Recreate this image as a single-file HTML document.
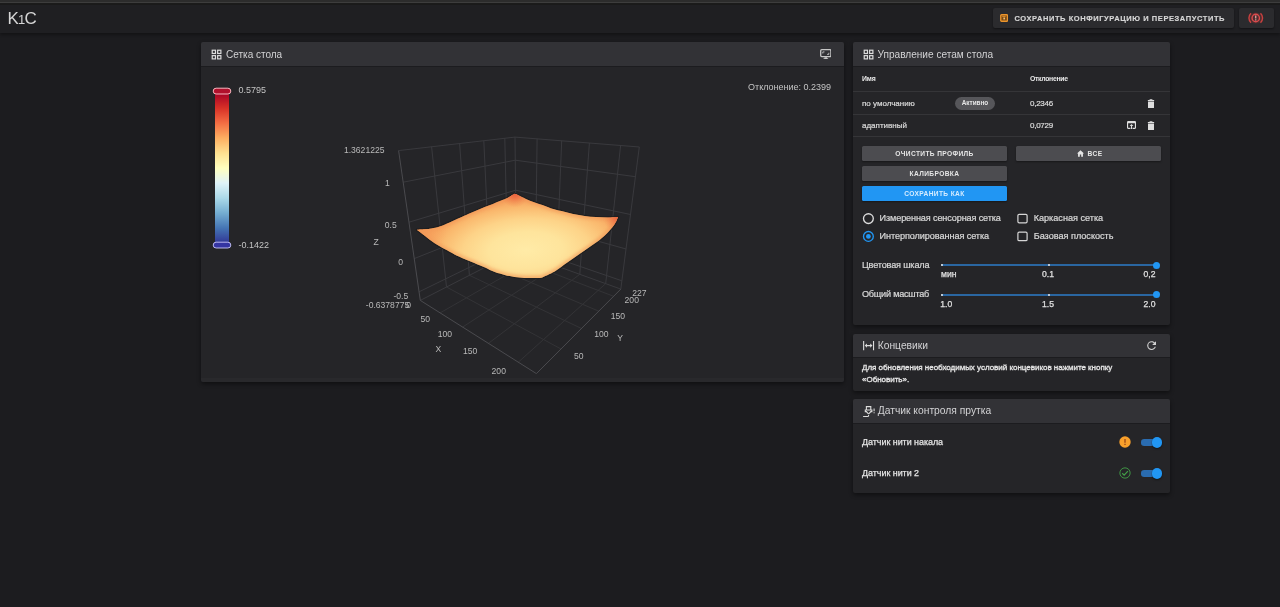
<!DOCTYPE html>
<html lang="ru"><head><meta charset="utf-8"><title>K1C</title>
<style>
*{box-sizing:border-box;margin:0;padding:0}
html,body{width:1280px;height:607px;overflow:hidden}
body{background:#1c1c1f;font-family:"Liberation Sans",sans-serif;color:#e2e2e2;position:relative;font-size:8px}
.abs{position:absolute}
#app{position:absolute;left:0;top:0;width:1280px;height:607px;will-change:transform}
.strip1{left:0;top:0;width:1280px;height:2px;background:#2c2c2c}
.strip2{left:0;top:2px;width:1280px;height:1px;background:#3d3d3d}
.strip3{left:0;top:3px;width:1280px;height:2px;background:#1b1b1b}
.appbar{left:0;top:5px;width:1280px;height:27.800px;background:#1f1f22;box-shadow:0 2px 3px rgba(0,0,0,.32)}
.logo{left:7.5px;top:9px;font-size:17px;line-height:20px;color:#d6d6d6;letter-spacing:-0.75px}
.logo small{font-size:13px}
.tbtn{top:8px;height:20px;background:#2b2b2e;border-radius:2px;box-shadow:0 1px 2px rgba(0,0,0,.4)}
.tbtn .t{position:absolute;left:21.5px;top:0;line-height:21.7px;font-size:7.5px;font-weight:bold;letter-spacing:.58px;color:#d6d6d6;-webkit-text-stroke:.15px #d6d6d6;white-space:nowrap}
.card{background:#252528;border-radius:2px;box-shadow:0 2px 4px rgba(0,0,0,.45)}
.hd{position:absolute;left:0;top:0;right:0;height:24px;background:#323236;border-radius:2px 2px 0 0;box-shadow:0 1px 0 rgba(0,0,0,.22)}
.hd .ti{position:absolute;top:0;line-height:25.3px;font-size:10px;color:#d2d2d4;white-space:nowrap}
.hd svg{position:absolute}
.th{font-size:6.9px;font-weight:bold;color:#e8e8e8;line-height:8px;white-space:nowrap}
.td{font-size:8px;color:#dcdcdc;line-height:10px;white-space:nowrap;-webkit-text-stroke:.2px #dcdcdc}
.hr{height:1px;background:#353538;left:0;right:0}
.chip{left:102px;top:55px;width:40px;height:12.5px;border-radius:7px;background:#56565a;color:#e6e6e6;font-size:6.4px;font-weight:bold;text-align:center;line-height:12.5px}
.btn{height:14.5px;background:#4c4c50;border-radius:1.5px;color:#e6e6e6;font-size:6.6px;font-weight:bold;letter-spacing:.38px;text-align:center;line-height:15px;box-shadow:0 1px 2px rgba(0,0,0,.4);white-space:nowrap}
.btn.blue{background:#2196f3;color:#d6ecff}
.lbl{font-size:9.1px;color:#d8d8d8;line-height:11px;white-space:nowrap;-webkit-text-stroke:.22px #d8d8d8}
.sl{font-size:8.6px;color:#e0e0e0;line-height:10px;white-space:nowrap;-webkit-text-stroke:.25px #e0e0e0}
.track{height:1.6px;background:#2a66a1;left:88px;width:216px}
.tick{width:2px;height:2px;border-radius:1px;background:#e8e8e8}
.thumb{width:7.4px;height:7.4px;border-radius:50%;background:#2196f3}
.sub{font-size:8px;line-height:12px;color:#e4e4e4;-webkit-text-stroke:.33px #e4e4e4;letter-spacing:-.02px;white-space:nowrap}
.row{font-size:8.9px;line-height:11px;color:#e4e4e4;-webkit-text-stroke:.25px #e4e4e4;white-space:nowrap}
.tog{width:17px;height:6.4px;border-radius:3.2px;background:#2a6cb0;margin-top:.3px}
.tth{width:10.6px;height:10.6px;border-radius:50%;background:#2196f3;box-shadow:0 1px 2px rgba(0,0,0,.5);margin:.4px 0 0 .6px}
svg text{font-family:"Liberation Sans",sans-serif}
.g{stroke:#39393d;stroke-width:1;fill:none}
.f{stroke:#333336;stroke-width:1;fill:none}
.a{stroke:#4a4a4e;stroke-width:1;fill:none}
</style></head><body><div id="app">
<div class="abs strip1"></div><div class="abs strip2"></div><div class="abs strip3"></div>
<div class="abs appbar"></div>
<div class="abs logo">K<small>1</small>C</div>

<div class="abs tbtn" style="left:993px;width:241px">
<svg class="abs" style="left:6.800px;top:6.200px" width="8.400" height="8.400" viewBox="0 0 9 9"><rect x=".8" y=".8" width="7.2" height="7" rx=".8" fill="#7b4a14" stroke="#ec952c" stroke-width="1.4"/><rect x="3.6" y="3.8" width="1.8" height="2" fill="#f6c070"/><rect x="2.4" y="2.2" width="3.6" height="1" fill="#d98a2a"/></svg>
<span class="t">СОХРАНИТЬ КОНФИГУРАЦИЮ И ПЕРЕЗАПУСТИТЬ</span></div>
<div class="abs tbtn" style="left:1239px;width:35px">
<svg class="abs" style="left:9.3px;top:4.2px" width="15.500" height="12" viewBox="0 0 31 24"><ellipse cx="15.500" cy="12" rx="14" ry="11" fill="#c23a3a" opacity=".22"/><g fill="none" stroke="#de4a4c" stroke-width="2.800"><circle cx="15.500" cy="12" r="7.400"/><path stroke="#c9403f" d="M6 2.500A13 13 0 0 0 6 21.500M25 2.500A13 13 0 0 1 25 21.500"/></g><path fill="#f0a9a4" d="M14.300 7h2.400v6h-2.400zM14.300 14.600h2.400v2.400h-2.400z"/></svg>
</div>

<!-- LEFT CARD -->
<div class="abs card" style="left:201px;top:42px;width:643px;height:340px">
 <div class="abs" style="left:0;right:0;bottom:0;height:4px;background:#29292c;border-radius:0 0 2px 2px"></div>
 <div class="hd">
  <svg style="left:9.3px;top:6.3px" width="13" height="13" viewBox="0 0 24 24"><g fill="none" stroke="#dcdcdc" stroke-width="2.2"><rect x="4.1" y="4.1" width="6" height="6"/><rect x="14.1" y="4.1" width="6" height="6"/><rect x="4.1" y="14.1" width="6" height="6"/><rect x="14.1" y="14.1" width="6" height="6"/></g></svg>
  <span class="ti" style="left:25px">Сетка стола</span>
  <svg style="left:618.8px;top:6.9px" width="11.600" height="10.200" viewBox="0 0 11.600 10.200"><rect x=".7" y=".7" width="10.200" height="6.900" rx="1" fill="none" stroke="#c6c6c6" stroke-width="1.300"/><path fill="none" stroke="#c6c6c6" stroke-width=".9" d="M2.800 4.500V2.900h1.700M8.800 3.800v1.600H7.100"/><path fill="#c6c6c6" d="M4.500 8.200h2.600v1h1v1H3.500v-1h1z"/></svg>
 </div>
</div>
<svg class="abs" style="left:0;top:0" width="1280" height="373.800" viewBox="0 0 1280 373.800">
<defs>
<linearGradient id="vm" x1="0" y1="0" x2="0" y2="1">
<stop offset="0" stop-color="#a50026"/><stop offset=".1" stop-color="#d73027"/><stop offset=".2" stop-color="#f46d43"/><stop offset=".3" stop-color="#fdae61"/><stop offset=".4" stop-color="#fee090"/><stop offset=".5" stop-color="#ffffbf"/><stop offset=".6" stop-color="#e0f3f8"/><stop offset=".7" stop-color="#abd9e9"/><stop offset=".8" stop-color="#74add1"/><stop offset=".9" stop-color="#4575b4"/><stop offset="1" stop-color="#313695"/>
</linearGradient>
<radialGradient id="sg" gradientUnits="userSpaceOnUse" cx="0" cy="0" r="1" gradientTransform="translate(526 250) rotate(-3) scale(116 57)">
<stop offset="0" stop-color="#ffeba7"/><stop offset=".32" stop-color="#fee49c"/><stop offset=".55" stop-color="#fdd388"/><stop offset=".75" stop-color="#fab96e"/><stop offset=".9" stop-color="#f6a15c"/><stop offset="1" stop-color="#f08c51"/>
</radialGradient>
<radialGradient id="c1" gradientUnits="userSpaceOnUse" cx="514.8" cy="192.500" r="15"><stop offset="0" stop-color="#e8553a"/><stop offset=".4" stop-color="#ec6a42" stop-opacity=".7"/><stop offset="1" stop-color="#f08c51" stop-opacity="0"/></radialGradient>
<radialGradient id="c2" gradientUnits="userSpaceOnUse" cx="619.500" cy="216" r="17"><stop offset="0" stop-color="#e8553a"/><stop offset=".4" stop-color="#ec6a42" stop-opacity=".7"/><stop offset="1" stop-color="#f08c51" stop-opacity="0"/></radialGradient>
<radialGradient id="c3" gradientUnits="userSpaceOnUse" cx="417" cy="230" r="30"><stop offset="0" stop-color="#f39a58"/><stop offset="1" stop-color="#f8a761" stop-opacity="0"/></radialGradient>
<filter id="bl" x="-10%" y="-10%" width="120%" height="120%"><feGaussianBlur stdDeviation="1.6"/></filter>
<clipPath id="sc"><path d="M416.9,229.8 C416.9,229.8 422.3,229.5 424.8,229.3 C427.3,229.1 429.3,228.9 431.8,228.4 C434.3,227.9 436.7,227.4 439.7,226.4 C442.7,225.4 446.2,223.9 449.6,222.4 C453.0,220.9 456.9,219.1 460.0,217.7 C463.1,216.3 465.4,215.2 468.2,214.0 C470.9,212.8 473.8,211.7 476.5,210.5 C479.2,209.3 482.0,208.1 484.7,207.0 C487.4,205.9 490.1,205.1 492.9,204.0 C495.6,202.9 499.0,201.5 501.2,200.6 C503.4,199.7 504.5,199.3 506.1,198.5 C507.8,197.7 509.7,196.5 511.1,195.7 C512.5,194.9 514.8,193.8 514.8,193.8 C514.8,193.8 517.4,194.8 519.3,195.7 C521.1,196.5 523.4,197.8 525.9,198.9 C528.4,200.0 531.4,201.2 534.1,202.2 C536.9,203.2 539.6,204.1 542.4,205.1 C545.1,206.1 547.4,207.2 550.6,208.2 C553.8,209.2 557.8,210.1 561.5,211.1 C565.2,212.1 569.2,213.2 573.1,214.0 C577.0,214.8 580.8,215.5 584.6,216.0 C588.4,216.5 592.3,216.9 596.1,217.1 C599.9,217.3 604.0,217.4 607.6,217.4 C611.2,217.4 618.0,216.9 618.0,216.9 C618.0,216.9 616.7,220.5 615.7,222.3 C614.7,224.1 613.6,225.8 612.2,227.5 C610.9,229.2 609.3,231.0 607.6,232.7 C605.9,234.4 603.8,236.3 601.9,237.9 C600.0,239.5 598.0,241.1 596.1,242.5 C594.2,243.9 592.2,245.2 590.3,246.5 C588.4,247.8 586.5,249.2 584.6,250.5 C582.7,251.8 580.7,253.2 578.8,254.6 C576.9,255.9 575.0,257.3 573.1,258.6 C571.2,259.9 569.2,261.2 567.3,262.6 C565.4,264.0 563.4,265.4 561.5,266.7 C559.6,268.0 557.8,269.5 555.8,270.7 C553.8,271.9 551.4,273.2 549.6,274.1 C547.9,275.0 546.5,275.6 545.3,276.1 C544.1,276.7 543.3,277.1 542.3,277.4 C541.3,277.7 540.6,277.8 539.3,277.9 C538.0,278.0 536.0,278.1 534.4,278.1 C532.8,278.1 531.1,278.1 529.5,278.1 C527.9,278.1 526.1,278.0 524.5,277.9 C522.9,277.8 521.2,277.8 519.6,277.6 C518.0,277.4 516.2,277.1 514.6,276.9 C513.0,276.6 511.4,276.4 509.7,276.1 C508.0,275.8 506.3,275.3 504.7,274.9 C503.1,274.5 501.4,274.1 499.8,273.6 C498.2,273.1 496.5,272.5 494.8,271.9 C493.1,271.3 491.6,270.8 489.9,270.0 C488.2,269.2 486.2,268.1 484.5,267.3 C482.8,266.5 481.3,266.0 479.6,265.3 C477.9,264.6 476.0,263.7 474.3,263.0 C472.6,262.3 471.0,261.7 469.3,261.0 C467.6,260.3 466.0,259.7 464.4,259.0 C462.8,258.3 461.1,257.5 459.5,256.7 C457.9,255.9 456.1,255.2 454.5,254.4 C452.9,253.6 451.2,252.7 449.6,251.8 C448.0,250.9 446.2,250.0 444.6,249.1 C443.0,248.2 441.4,247.2 439.7,246.2 C438.0,245.2 436.3,244.3 434.7,243.2 C433.1,242.1 431.4,240.9 429.8,239.7 C428.2,238.5 426.3,237.0 424.8,235.8 C423.3,234.7 422.2,233.8 420.9,232.8 C419.6,231.8 416.9,229.8 416.9,229.8Z"/></clipPath>
</defs>
<!-- visual map -->
<rect x="215" y="93" width="14" height="150" fill="url(#vm)"/>
<rect x="213.2" y="88.2" width="17.6" height="5.8" rx="2.9" fill="#b0102c" stroke="#f8b8c0" stroke-width="1"/>
<rect x="213.2" y="242.2" width="17.6" height="5.8" rx="2.9" fill="#3535a2" stroke="#bcbaf0" stroke-width="1"/>
<g font-size="9" fill="#c4c4c4"><text x="238.5" y="93.5">0.5795</text><text x="238.5" y="247.6">-0.1422</text>
<text x="831" y="90.2" text-anchor="end">Отклонение: 0.2399</text></g>
<!-- grid -->
<path class="g" d="M446.5,287.0 L431.6,146.8"/>
<path class="g" d="M469.4,275.3 L459.6,143.5"/>
<path class="g" d="M489.6,265.0 L483.8,140.7"/>
<path class="g" d="M507.5,255.9 L504.8,138.3"/>
<path class="g" d="M419.1,291.8 L516.2,244.5"/>
<path class="g" d="M414.2,258.6 L515.9,218.3"/>
<path class="g" d="M409.0,222.2 L515.6,190.2"/>
<path class="g" d="M403.2,182.2 L515.3,160.2"/>
<path class="g" d="M535.5,258.3 L537.1,138.8"/>
<path class="g" d="M556.6,265.9 L561.7,140.8"/>
<path class="g" d="M579.8,274.3 L589.4,143.0"/>
<path class="g" d="M605.7,283.6 L620.6,145.5"/>
<path class="g" d="M516.2,244.5 L621.9,280.8"/>
<path class="g" d="M515.9,218.3 L626.0,249.0"/>
<path class="g" d="M515.6,190.2 L630.5,214.5"/>
<path class="g" d="M515.3,160.2 L635.4,176.7"/>
<path class="f" d="M440.1,312.9 L535.5,258.3"/>
<path class="f" d="M446.5,287.0 L561.0,349.0"/>
<path class="f" d="M462.6,327.1 L556.6,265.9"/>
<path class="f" d="M469.4,275.3 L581.5,328.5"/>
<path class="f" d="M488.4,343.4 L579.8,274.3"/>
<path class="f" d="M489.6,265.0 L598.8,311.2"/>
<path class="f" d="M518.3,362.2 L605.7,283.6"/>
<path class="f" d="M507.5,255.9 L613.7,296.3"/>
<path class="g" d="M398.6,150.6 L515.0,137.1"/>
<path class="g" d="M515.0,137.1 L639.3,147.0"/>
<path class="g" d="M516.3,251.4 L515.0,137.1"/>
<path class="g" d="M620.8,289.1 L639.3,147.0"/>
<path class="g" d="M420.3,300.4 L516.3,251.4"/>
<path class="g" d="M516.3,251.4 L620.8,289.1"/>
<path class="a" d="M420.3,300.4 L398.6,150.6"/>
<path class="a" d="M420.3,300.4 L536.4,373.6"/>
<path class="a" d="M536.4,373.6 L620.8,289.1"/>
<!-- surface -->
<path d="M416.9,229.8 C416.9,229.8 422.3,229.5 424.8,229.3 C427.3,229.1 429.3,228.9 431.8,228.4 C434.3,227.9 436.7,227.4 439.7,226.4 C442.7,225.4 446.2,223.9 449.6,222.4 C453.0,220.9 456.9,219.1 460.0,217.7 C463.1,216.3 465.4,215.2 468.2,214.0 C470.9,212.8 473.8,211.7 476.5,210.5 C479.2,209.3 482.0,208.1 484.7,207.0 C487.4,205.9 490.1,205.1 492.9,204.0 C495.6,202.9 499.0,201.5 501.2,200.6 C503.4,199.7 504.5,199.3 506.1,198.5 C507.8,197.7 509.7,196.5 511.1,195.7 C512.5,194.9 514.8,193.8 514.8,193.8 C514.8,193.8 517.4,194.8 519.3,195.7 C521.1,196.5 523.4,197.8 525.9,198.9 C528.4,200.0 531.4,201.2 534.1,202.2 C536.9,203.2 539.6,204.1 542.4,205.1 C545.1,206.1 547.4,207.2 550.6,208.2 C553.8,209.2 557.8,210.1 561.5,211.1 C565.2,212.1 569.2,213.2 573.1,214.0 C577.0,214.8 580.8,215.5 584.6,216.0 C588.4,216.5 592.3,216.9 596.1,217.1 C599.9,217.3 604.0,217.4 607.6,217.4 C611.2,217.4 618.0,216.9 618.0,216.9 C618.0,216.9 616.7,220.5 615.7,222.3 C614.7,224.1 613.6,225.8 612.2,227.5 C610.9,229.2 609.3,231.0 607.6,232.7 C605.9,234.4 603.8,236.3 601.9,237.9 C600.0,239.5 598.0,241.1 596.1,242.5 C594.2,243.9 592.2,245.2 590.3,246.5 C588.4,247.8 586.5,249.2 584.6,250.5 C582.7,251.8 580.7,253.2 578.8,254.6 C576.9,255.9 575.0,257.3 573.1,258.6 C571.2,259.9 569.2,261.2 567.3,262.6 C565.4,264.0 563.4,265.4 561.5,266.7 C559.6,268.0 557.8,269.5 555.8,270.7 C553.8,271.9 551.4,273.2 549.6,274.1 C547.9,275.0 546.5,275.6 545.3,276.1 C544.1,276.7 543.3,277.1 542.3,277.4 C541.3,277.7 540.6,277.8 539.3,277.9 C538.0,278.0 536.0,278.1 534.4,278.1 C532.8,278.1 531.1,278.1 529.5,278.1 C527.9,278.1 526.1,278.0 524.5,277.9 C522.9,277.8 521.2,277.8 519.6,277.6 C518.0,277.4 516.2,277.1 514.6,276.9 C513.0,276.6 511.4,276.4 509.7,276.1 C508.0,275.8 506.3,275.3 504.7,274.9 C503.1,274.5 501.4,274.1 499.8,273.6 C498.2,273.1 496.5,272.5 494.8,271.9 C493.1,271.3 491.6,270.8 489.9,270.0 C488.2,269.2 486.2,268.1 484.5,267.3 C482.8,266.5 481.3,266.0 479.6,265.3 C477.9,264.6 476.0,263.7 474.3,263.0 C472.6,262.3 471.0,261.7 469.3,261.0 C467.6,260.3 466.0,259.7 464.4,259.0 C462.8,258.3 461.1,257.5 459.5,256.7 C457.9,255.9 456.1,255.2 454.5,254.4 C452.9,253.6 451.2,252.7 449.6,251.8 C448.0,250.9 446.2,250.0 444.6,249.1 C443.0,248.2 441.4,247.2 439.7,246.2 C438.0,245.2 436.3,244.3 434.7,243.2 C433.1,242.1 431.4,240.9 429.8,239.7 C428.2,238.5 426.3,237.0 424.8,235.8 C423.3,234.7 422.2,233.8 420.9,232.8 C419.6,231.8 416.9,229.8 416.9,229.8Z" fill="none" stroke="#1c1c1e" stroke-width="2.4" stroke-linejoin="round" opacity=".75"/>
<path d="M416.9,229.8 C416.9,229.8 422.3,229.5 424.8,229.3 C427.3,229.1 429.3,228.9 431.8,228.4 C434.3,227.9 436.7,227.4 439.7,226.4 C442.7,225.4 446.2,223.9 449.6,222.4 C453.0,220.9 456.9,219.1 460.0,217.7 C463.1,216.3 465.4,215.2 468.2,214.0 C470.9,212.8 473.8,211.7 476.5,210.5 C479.2,209.3 482.0,208.1 484.7,207.0 C487.4,205.9 490.1,205.1 492.9,204.0 C495.6,202.9 499.0,201.5 501.2,200.6 C503.4,199.7 504.5,199.3 506.1,198.5 C507.8,197.7 509.7,196.5 511.1,195.7 C512.5,194.9 514.8,193.8 514.8,193.8 C514.8,193.8 517.4,194.8 519.3,195.7 C521.1,196.5 523.4,197.8 525.9,198.9 C528.4,200.0 531.4,201.2 534.1,202.2 C536.9,203.2 539.6,204.1 542.4,205.1 C545.1,206.1 547.4,207.2 550.6,208.2 C553.8,209.2 557.8,210.1 561.5,211.1 C565.2,212.1 569.2,213.2 573.1,214.0 C577.0,214.8 580.8,215.5 584.6,216.0 C588.4,216.5 592.3,216.9 596.1,217.1 C599.9,217.3 604.0,217.4 607.6,217.4 C611.2,217.4 618.0,216.9 618.0,216.9 C618.0,216.9 616.7,220.5 615.7,222.3 C614.7,224.1 613.6,225.8 612.2,227.5 C610.9,229.2 609.3,231.0 607.6,232.7 C605.9,234.4 603.8,236.3 601.9,237.9 C600.0,239.5 598.0,241.1 596.1,242.5 C594.2,243.9 592.2,245.2 590.3,246.5 C588.4,247.8 586.5,249.2 584.6,250.5 C582.7,251.8 580.7,253.2 578.8,254.6 C576.9,255.9 575.0,257.3 573.1,258.6 C571.2,259.9 569.2,261.2 567.3,262.6 C565.4,264.0 563.4,265.4 561.5,266.7 C559.6,268.0 557.8,269.5 555.8,270.7 C553.8,271.9 551.4,273.2 549.6,274.1 C547.9,275.0 546.5,275.6 545.3,276.1 C544.1,276.7 543.3,277.1 542.3,277.4 C541.3,277.7 540.6,277.8 539.3,277.9 C538.0,278.0 536.0,278.1 534.4,278.1 C532.8,278.1 531.1,278.1 529.5,278.1 C527.9,278.1 526.1,278.0 524.5,277.9 C522.9,277.8 521.2,277.8 519.6,277.6 C518.0,277.4 516.2,277.1 514.6,276.9 C513.0,276.6 511.4,276.4 509.7,276.1 C508.0,275.8 506.3,275.3 504.7,274.9 C503.1,274.5 501.4,274.1 499.8,273.6 C498.2,273.1 496.5,272.5 494.8,271.9 C493.1,271.3 491.6,270.8 489.9,270.0 C488.2,269.2 486.2,268.1 484.5,267.3 C482.8,266.5 481.3,266.0 479.6,265.3 C477.9,264.6 476.0,263.7 474.3,263.0 C472.6,262.3 471.0,261.7 469.3,261.0 C467.6,260.3 466.0,259.7 464.4,259.0 C462.8,258.3 461.1,257.5 459.5,256.7 C457.9,255.9 456.1,255.2 454.5,254.4 C452.9,253.6 451.2,252.7 449.6,251.8 C448.0,250.9 446.2,250.0 444.6,249.1 C443.0,248.2 441.4,247.2 439.7,246.2 C438.0,245.2 436.3,244.3 434.7,243.2 C433.1,242.1 431.4,240.9 429.8,239.7 C428.2,238.5 426.3,237.0 424.8,235.8 C423.3,234.7 422.2,233.8 420.9,232.8 C419.6,231.8 416.9,229.8 416.9,229.8Z" fill="url(#sg)"/>
<g clip-path="url(#sc)"><path d="M416.9,229.8 C416.9,229.8 422.3,229.5 424.8,229.3 C427.3,229.1 429.3,228.9 431.8,228.4 C434.3,227.9 436.7,227.4 439.7,226.4 C442.7,225.4 446.2,223.9 449.6,222.4 C453.0,220.9 456.9,219.1 460.0,217.7 C463.1,216.3 465.4,215.2 468.2,214.0 C470.9,212.8 473.8,211.7 476.5,210.5 C479.2,209.3 482.0,208.1 484.7,207.0 C487.4,205.9 490.1,205.1 492.9,204.0 C495.6,202.9 499.0,201.5 501.2,200.6 C503.4,199.7 504.5,199.3 506.1,198.5 C507.8,197.7 509.7,196.5 511.1,195.7 C512.5,194.9 514.8,193.8 514.8,193.8 C514.8,193.8 517.4,194.8 519.3,195.7 C521.1,196.5 523.4,197.8 525.9,198.9 C528.4,200.0 531.4,201.2 534.1,202.2 C536.9,203.2 539.6,204.1 542.4,205.1 C545.1,206.1 547.4,207.2 550.6,208.2 C553.8,209.2 557.8,210.1 561.5,211.1 C565.2,212.1 569.2,213.2 573.1,214.0 C577.0,214.8 580.8,215.5 584.6,216.0 C588.4,216.5 592.3,216.9 596.1,217.1 C599.9,217.3 604.0,217.4 607.6,217.4 C611.2,217.4 618.0,216.9 618.0,216.9 C618.0,216.9 616.7,220.5 615.7,222.3 C614.7,224.1 613.6,225.8 612.2,227.5 C610.9,229.2 609.3,231.0 607.6,232.7 C605.9,234.4 603.8,236.3 601.9,237.9 C600.0,239.5 598.0,241.1 596.1,242.5 C594.2,243.9 592.2,245.2 590.3,246.5 C588.4,247.8 586.5,249.2 584.6,250.5 C582.7,251.8 580.7,253.2 578.8,254.6 C576.9,255.9 575.0,257.3 573.1,258.6 C571.2,259.9 569.2,261.2 567.3,262.6 C565.4,264.0 563.4,265.4 561.5,266.7 C559.6,268.0 557.8,269.5 555.8,270.7 C553.8,271.9 551.4,273.2 549.6,274.1 C547.9,275.0 546.5,275.6 545.3,276.1 C544.1,276.7 543.3,277.1 542.3,277.4 C541.3,277.7 540.6,277.8 539.3,277.9 C538.0,278.0 536.0,278.1 534.4,278.1 C532.8,278.1 531.1,278.1 529.5,278.1 C527.9,278.1 526.1,278.0 524.5,277.9 C522.9,277.8 521.2,277.8 519.6,277.6 C518.0,277.4 516.2,277.1 514.6,276.9 C513.0,276.6 511.4,276.4 509.7,276.1 C508.0,275.8 506.3,275.3 504.7,274.9 C503.1,274.5 501.4,274.1 499.8,273.6 C498.2,273.1 496.5,272.5 494.8,271.9 C493.1,271.3 491.6,270.8 489.9,270.0 C488.2,269.2 486.2,268.1 484.5,267.3 C482.8,266.5 481.3,266.0 479.6,265.3 C477.9,264.6 476.0,263.7 474.3,263.0 C472.6,262.3 471.0,261.7 469.3,261.0 C467.6,260.3 466.0,259.7 464.4,259.0 C462.8,258.3 461.1,257.5 459.5,256.7 C457.9,255.9 456.1,255.2 454.5,254.4 C452.9,253.6 451.2,252.7 449.6,251.8 C448.0,250.9 446.2,250.0 444.6,249.1 C443.0,248.2 441.4,247.2 439.7,246.2 C438.0,245.2 436.3,244.3 434.7,243.2 C433.1,242.1 431.4,240.9 429.8,239.7 C428.2,238.5 426.3,237.0 424.8,235.8 C423.3,234.7 422.2,233.8 420.9,232.8 C419.6,231.8 416.9,229.8 416.9,229.8Z" fill="none" stroke="#f29556" stroke-width="5" opacity=".55" filter="url(#bl)"/><circle cx="417" cy="230" r="30" fill="url(#c3)"/><circle cx="514.8" cy="192.500" r="15" fill="url(#c1)"/><circle cx="619.500" cy="216" r="17" fill="url(#c2)"/></g>
<g font-size="8.6" fill="#b9b9b9">
<text x="384.5" y="153.5" text-anchor="end">1.3621225</text>
<text x="389.7" y="186.5" text-anchor="end">1</text>
<text x="396.7" y="227.6" text-anchor="end">0.5</text>
<text x="403.0" y="264.6" text-anchor="end">0</text>
<text x="408.2" y="298.6" text-anchor="end">-0.5</text>
<text x="409.2" y="308.1" text-anchor="end">-0.6378775</text>
<text x="373.6" y="244.8" text-anchor="start">Z</text>
<text x="406.2" y="308.5" text-anchor="start">0</text>
<text x="420.6" y="321.9" text-anchor="start">50</text>
<text x="437.8" y="337.1" text-anchor="start">100</text>
<text x="463.0" y="354.3" text-anchor="start">150</text>
<text x="491.6" y="374.5" text-anchor="start">200</text>
<text x="435.5" y="352.5" text-anchor="start">X</text>
<text x="632.3" y="295.7" text-anchor="start">227</text>
<text x="624.6" y="303.5" text-anchor="start">200</text>
<text x="610.8" y="318.7" text-anchor="start">150</text>
<text x="594.2" y="337.2" text-anchor="start">100</text>
<text x="574.1" y="359.1" text-anchor="start">50</text>
<text x="617.3" y="341.1" text-anchor="start">Y</text>
</g>
</svg>

<!-- RIGHT CARD 1 -->
<div class="abs card" style="left:853px;top:42px;width:317px;height:283px">
 <div class="hd">
  <svg style="left:8.6px;top:6.3px" width="13" height="13" viewBox="0 0 24 24"><g fill="none" stroke="#dcdcdc" stroke-width="2.2"><rect x="4.1" y="4.1" width="6" height="6"/><rect x="14.1" y="4.1" width="6" height="6"/><rect x="4.1" y="14.1" width="6" height="6"/><rect x="14.1" y="14.1" width="6" height="6"/></g></svg>
  <span class="ti" style="left:24.5px;font-size:10.1px">Управление сетам стола</span>
 </div>
 <div class="abs th" style="left:9px;top:32.5px;letter-spacing:-.2px">Имя</div>
 <div class="abs th" style="left:177px;top:32.5px;letter-spacing:-.33px">Отклонение</div>
 <div class="abs hr" style="top:48.6px"></div>
 <div class="abs td" style="left:9px;top:56.5px">по умолчанию</div>
 <div class="abs chip">Активно</div>
 <div class="abs td" style="left:177px;top:56.5px;letter-spacing:-.25px">0,2346</div>
 <svg class="abs" style="left:294px;top:56.5px" width="8" height="9.5" viewBox="0 0 16 19"><path fill="#dedede" d="M2 17a2 2 0 0 0 2 2h8a2 2 0 0 0 2-2V5H2v12zM14.300 1.800h-3.100l-.8-1.300H5.600l-.8 1.300H1.700V4h12.600z"/></svg>
 <div class="abs hr" style="top:71.6px"></div>
 <div class="abs td" style="left:9px;top:78.5px">адаптивный</div>
 <div class="abs td" style="left:177px;top:78.5px;letter-spacing:-.25px">0,0729</div>
 <svg class="abs" style="left:274px;top:79px" width="9" height="8" viewBox="0 0 24 21"><path fill="#dedede" d="M21 0H3a3 3 0 0 0-3 3v15a3 3 0 0 0 3 3h6v-3H3V6h18v12h-6v3h6a3 3 0 0 0 3-3V3a3 3 0 0 0-3-3zm-9 8l-5 5h3.5v8h3v-8H17l-5-5z"/></svg>
 <svg class="abs" style="left:294px;top:78.6px" width="8" height="9.5" viewBox="0 0 16 19"><path fill="#dedede" d="M2 17a2 2 0 0 0 2 2h8a2 2 0 0 0 2-2V5H2v12zM14.300 1.800h-3.100l-.8-1.300H5.600l-.8 1.300H1.700V4h12.600z"/></svg>
 <div class="abs hr" style="top:94.3px"></div>
 <div class="abs btn" style="left:9px;top:104.3px;width:145px">ОЧИСТИТЬ ПРОФИЛЬ</div>
 <div class="abs btn" style="left:163px;top:104.3px;width:145px;padding-left:2px"><svg style="position:relative;top:1px;margin-right:4px" width="7" height="7" viewBox="0 0 20 20"><path fill="#e6e6e6" d="M10 1L0 10h3v9h5v-6h4v6h5v-9h3z"/></svg>ВСЕ</div>
 <div class="abs btn" style="left:9px;top:124.3px;width:145px">КАЛИБРОВКА</div>
 <div class="abs btn blue" style="left:9px;top:144.2px;width:145px">СОХРАНИТЬ КАК</div>

 <svg class="abs" style="left:9px;top:170px" width="14" height="32" viewBox="0 0 14 32"><circle cx="6.4" cy="6.6" r="4.9" fill="none" stroke="#dcdcdc" stroke-width="1.35"/><circle cx="6.4" cy="24.4" r="4.9" fill="none" stroke="#2196f3" stroke-width="1.35"/><circle cx="6.4" cy="24.4" r="2.4" fill="#2196f3"/></svg>
 <div class="abs lbl" style="left:26.6px;top:171.2px;letter-spacing:-.12px">Измеренная сенсорная сетка</div>
 <div class="abs lbl" style="left:26.6px;top:189px;letter-spacing:-.07px">Интерполированная сетка</div>
 <svg class="abs" style="left:163px;top:170px" width="14" height="32" viewBox="0 0 14 32"><rect x="1.9" y="2.3" width="9.2" height="8.6" rx="1.3" fill="none" stroke="#d6d6d6" stroke-width="1.2"/><rect x="1.9" y="20.1" width="9.2" height="8.6" rx="1.3" fill="none" stroke="#d6d6d6" stroke-width="1.2"/></svg>
 <div class="abs lbl" style="left:180.7px;top:171.2px">Каркасная сетка</div>
 <div class="abs lbl" style="left:180.7px;top:189px">Базовая плоскость</div>

 <div class="abs lbl" style="left:9px;top:217.5px;letter-spacing:-.15px">Цветовая шкала</div>
 <div class="abs track" style="top:222.4px"></div>
 <div class="abs tick" style="left:87.5px;top:222.2px"></div><div class="abs tick" style="left:195px;top:222.2px"></div>
 <div class="abs thumb" style="left:299.8px;top:219.5px"></div>
 <div class="abs sl" style="left:88px;top:226.8px">мин</div>
 <div class="abs sl" style="left:189px;top:226.8px">0.1</div>
 <div class="abs sl" style="left:290.6px;top:226.8px">0,2</div>

 <div class="abs lbl" style="left:9px;top:247.3px;letter-spacing:-.22px">Общий масштаб</div>
 <div class="abs track" style="top:252px"></div>
 <div class="abs tick" style="left:87.5px;top:251.8px"></div><div class="abs tick" style="left:195px;top:251.8px"></div>
 <div class="abs thumb" style="left:299.8px;top:249.1px"></div>
 <div class="abs sl" style="left:87.3px;top:257px">1.0</div>
 <div class="abs sl" style="left:189px;top:257px">1.5</div>
 <div class="abs sl" style="left:290.6px;top:257px">2.0</div>
</div>

<!-- RIGHT CARD 2 -->
<div class="abs card" style="left:853px;top:333.6px;width:317px;height:57px">
 <div class="hd" style="height:23.5px">
  <svg style="left:8.75px;top:5.4px" width="13.200" height="13.200" viewBox="0 0 24 24"><path fill="#dcdcdc" d="M9,11H15V8L19,12L15,16V13H9V16L5,12L9,8V11M2,20.500V3.500H4V20.500H2M20,20.500V3.500H22V20.500H20Z"/></svg>
  <span class="ti" style="left:24.7px;line-height:24px;font-size:10.3px">Концевики</span>
  <svg style="left:291.900px;top:5.100px" width="13.200" height="13.200" viewBox="0 0 24 24"><path fill="#d4d4d4" d="M17.650,6.350C16.200,4.900 14.210,4 12,4A8,8 0 0,0 4,12A8,8 0 0,0 12,20C15.730,20 18.840,17.450 19.730,14H17.650C16.830,16.330 14.610,18 12,18A6,6 0 0,1 6,12A6,6 0 0,1 12,6C13.660,6 15.140,6.690 16.220,7.780L13,11H20V4L17.650,6.350Z"/></svg>
 </div>
 <div class="abs sub" style="left:9px;top:28.1px">Для обновления необходимых условий концевиков нажмите кнопку<br>«Обновить».</div>
</div>

<!-- RIGHT CARD 3 -->
<div class="abs card" style="left:853px;top:399.3px;width:317px;height:93.600px">
 <div class="hd" style="height:23.5px">
  <svg style="left:8.650px;top:5.300px" width="13.200" height="13.200" viewBox="0 0 24 24"><path fill="#dcdcdc" d="M7 2H17V8H19V13H16.500L13 17H11L7.500 13H5V8H7V2M10 22H2V20H10A1 1 0 0 0 11 19V18H13V19A3 3 0 0 1 10 22M7 10V11H8.500L12 15L15.500 11H17V10H7M9 4V8H15V4H9M21 13H23V15H21V13M21 6.500H23V11.500H21V6.500Z"/></svg>
  <span class="ti" style="left:24.7px;line-height:24px;font-size:10.3px">Датчик контроля прутка</span>
 </div>
 <div class="abs row" style="left:9px;top:37.3px">Датчик нити накала</div>
 <svg class="abs" style="left:265.600px;top:37.100px" width="12" height="12" viewBox="0 0 24 24"><circle cx="12" cy="12" r="11.4" fill="#f9a02b"/><path fill="#7a2a12" d="M11 6h2v7.500h-2zM11 15.500h2v2.300h-2z"/></svg>
 <div class="abs tog" style="left:288px;top:39.600px"></div><div class="abs tth" style="left:298px;top:37.400px"></div>
 <div class="abs row" style="left:9px;top:68.3px">Датчик нити 2</div>
 <svg class="abs" style="left:265.600px;top:68.100px" width="12" height="12" viewBox="0 0 24 24"><circle cx="12" cy="12" r="10.300" fill="none" stroke="#43a047" stroke-width="1.800"/><path fill="none" stroke="#43a047" stroke-width="2.400" d="M6.500 12.500l3.800 3.800 7.500-8"/></svg>
 <div class="abs tog" style="left:288px;top:70.600px"></div><div class="abs tth" style="left:298px;top:68.400px"></div>
</div>
</div></body></html>
